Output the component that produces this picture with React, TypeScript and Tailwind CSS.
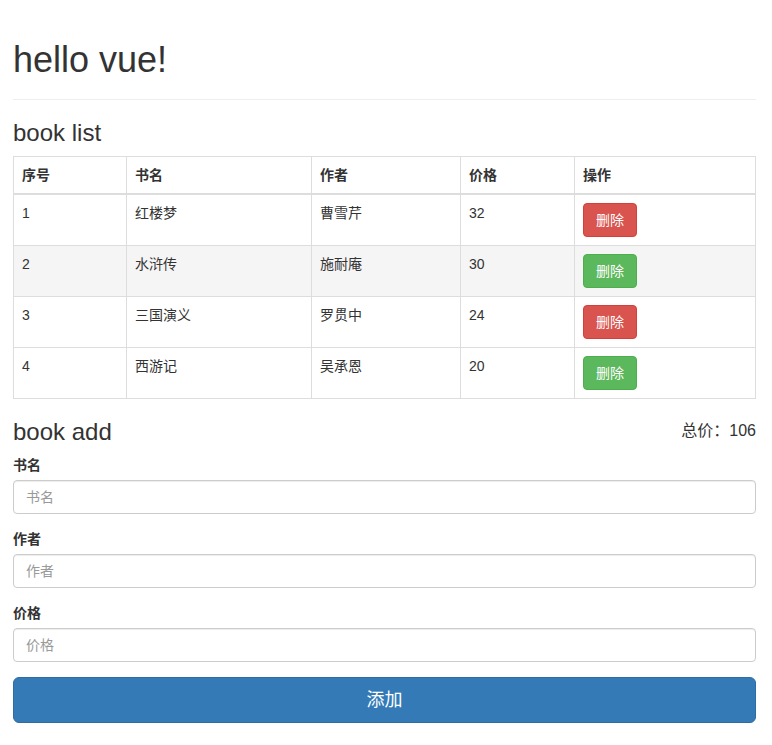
import React, { useState } from 'react';

interface Book {
  id: number;
  name: string;
  author: string;
  price: number;
}

const font = "font-['Helvetica_Neue','Liberation_Sans','Noto_Sans_CJK_SC',sans-serif]";

const App: React.FC = () => {
  const [books] = useState<Book[]>([
    { id: 1, name: '红楼梦', author: '曹雪芹', price: 32 },
    { id: 2, name: '水浒传', author: '施耐庵', price: 30 },
    { id: 3, name: '三国演义', author: '罗贯中', price: 24 },
    { id: 4, name: '西游记', author: '吴承恩', price: 20 },
  ]);

  const total = books.reduce((s, b) => s + b.price, 0);
  const cell = 'border border-[#ddd] p-2 align-top text-left leading-5';

  return (
    <div className={`${font} bg-white px-[13px] pt-10 text-[14px] text-[#333] w-[769px]`}>
      {/* 页头 */}
      <div className="mb-5 border-b border-[#eee] pb-[9px]">
        <h1 className="mb-[10px] text-[36px] leading-[1.1] font-normal">hello vue!</h1>
      </div>

      <h3 className="mb-[10px] text-[24px] leading-[1.1] font-normal">book list</h3>
      <table className="mb-5 w-[743px] border-collapse">
        <thead>
          <tr>
            <th className={`${cell} w-[113px] border-b-2 font-bold`}>序号</th>
            <th className={`${cell} w-[185px] border-b-2 font-bold`}>书名</th>
            <th className={`${cell} w-[149px] border-b-2 font-bold`}>作者</th>
            <th className={`${cell} w-[114px] border-b-2 font-bold`}>价格</th>
            <th className={`${cell} border-b-2 font-bold`}>操作</th>
          </tr>
        </thead>
        <tbody>
          {books.map((b, i) => (
            <tr key={b.id} className={i === 1 ? 'bg-[#f5f5f5]' : ''}>
              <td className={cell}>{b.id}</td>
              <td className={cell}>{b.name}</td>
              <td className={cell}>{b.author}</td>
              <td className={cell}>{b.price}</td>
              <td className={cell}>
                <button
                  className={
                    i % 2 === 0
                      ? 'rounded border border-[#d43f3a] bg-[#d9534f] px-3 py-[6px] leading-5 text-white'
                      : 'rounded border border-[#4cae4c] bg-[#5cb85c] px-3 py-[6px] leading-5 text-white'
                  }
                >
                  删除
                </button>
              </td>
            </tr>
          ))}
        </tbody>
      </table>

      {/* 添加表单 */}
      <div className="flex items-start justify-between">
        <h3 className="mb-[10px] text-[24px] leading-[1.1] font-normal">book add</h3>
        <span className="mt-[1px] text-[16px] leading-[22px]">总价：{total}</span>
      </div>
      <form onSubmit={e => e.preventDefault()}>
        {['书名', '作者', '价格'].map(label => (
          <div key={label} className="mb-[15px]">
            <label className="mb-[5px] inline-block font-bold leading-5">{label}</label>
            <input
              placeholder={label}
              className="block h-[34px] w-full rounded border border-[#ccc] px-3 py-[6px] leading-5 shadow-[inset_0_1px_1px_rgba(0,0,0,0.075)] outline-none placeholder:text-[#999]"
            />
          </div>
        ))}
        <button
          type="submit"
          className="block w-full rounded-md border border-[#2e6da4] bg-[#337ab7] px-4 py-[10px] text-[18px] leading-6 text-white"
        >
          添加
        </button>
      </form>
    </div>
  );
};

export default App;
